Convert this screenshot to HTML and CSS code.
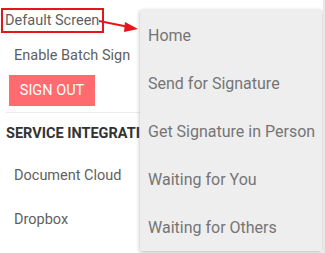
FILE: index.html
```html
<!DOCTYPE html>
<html>
<head>
<meta charset="utf-8">
<link rel="stylesheet" href="styles.css">
</head>
<body>
<div class="page">
  <div class="settings">
    <div class="row default"><span class="label-box">Default Screen</span></div>
    <div class="row item">Enable Batch Sign</div>
    <div class="btn-row"><button class="signout">SIGN OUT</button></div>
    <div class="sep"></div>
    <div class="section">SERVICE INTEGRATIONS</div>
    <div class="row item svc">Document Cloud</div>
    <div class="row item svc">Dropbox</div>
  </div>
  <svg class="arrow" width="50" height="20" viewBox="0 0 50 20">
    <line x1="0" y1="5" x2="30" y2="11" stroke="#e8141c" stroke-width="2"/>
    <polygon points="39,13 26,6 25,16" fill="#e8141c"/>
  </svg>
  <div class="menu">
    <div class="menu-item">Home</div>
    <div class="menu-item">Send for Signature</div>
    <div class="menu-item">Get Signature in Person</div>
    <div class="menu-item">Waiting for You</div>
    <div class="menu-item">Waiting for Others</div>
  </div>
  <div class="scroll"></div>
</div>
</body>
</html>
```
FILE: styles.css
```css
html, body { margin: 0; padding: 0; background: #fff; }
body { font-family: Roboto, "Noto Sans", sans-serif; width: 325px; height: 253px; overflow: hidden; }
.page { position: relative; width: 325px; height: 253px; }
.settings { display: flex; flex-direction: column; padding-top: 8px; }
.row { color: #5f5f5f; font-size: 14.5px; }
.default { height: 25px; display: flex; align-items: center; padding-left: 1px; }
.label-box { border: 2px solid #e8141c; box-sizing: border-box; height: 25px; line-height: 21px; padding: 0 3px 0 2px; }
.item { padding-left: 14px; }
.row.item:nth-child(2) { margin-top: 11px; height: 24px; line-height: 24px; }
.btn-row { padding-left: 9px; margin-top: 7px; }
.signout { background: #ff6b6e; color: #fff; border: none; font-family: Roboto, sans-serif; font-size: 14.5px; width: 86px; height: 31px; padding: 0; display: block; }
.sep { margin: 6px 0 0 6px; width: 140px; height: 1px; background: #ececec; }
.section { padding-left: 6px; font-weight: bold; font-size: 14.5px; color: #333; margin-top: 11px; height: 20px; line-height: 20px; white-space: nowrap; width: 134px; overflow: hidden; }
.svc { height: 24px; line-height: 24px; }
.section + .svc { margin-top: 20px; }
.svc + .svc { margin-top: 20px; }
.arrow { position: absolute; left: 99px; top: 16px; }
.menu { position: absolute; left: 140px; top: 10px; width: 182px; height: 241px; background: #eeeeee; box-shadow: 0 1px 4px rgba(0,0,0,0.3); padding-top: 2px; box-sizing: border-box; }
.menu-item { height: 48px; line-height: 48px; padding-left: 8px; font-size: 16px; color: #757575; white-space: nowrap; }
.scroll { position: absolute; right: 0; top: 0; width: 2px; height: 253px; background: #e8e8e8; }
```
